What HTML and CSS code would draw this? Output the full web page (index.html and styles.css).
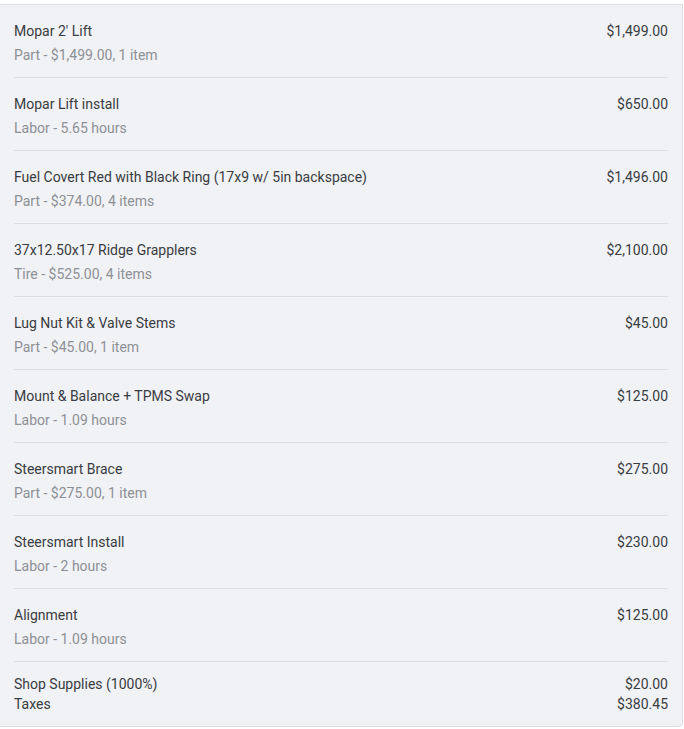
FILE: index.html
```html
<!DOCTYPE html>
<html lang="en">

<head>
  <meta charset="UTF-8">
  <title>Line Items</title>
  <link rel="stylesheet" href="styles.css">
</head>

<body>

  <div class="items-panel">
    <div class="line-item">
      <div class="item-info">
        <div class="item-name">Mopar 2' Lift</div>
        <div class="item-detail">Part - $1,499.00, 1 item</div>
      </div>
      <div class="item-total">$1,499.00</div>
    </div>

    <div class="line-item">
      <div class="item-info">
        <div class="item-name">Mopar Lift install</div>
        <div class="item-detail">Labor - 5.65 hours</div>
      </div>
      <div class="item-total">$650.00</div>
    </div>

    <div class="line-item">
      <div class="item-info">
        <div class="item-name">Fuel Covert Red with Black Ring (17x9 w/ 5in backspace)</div>
        <div class="item-detail">Part - $374.00, 4 items</div>
      </div>
      <div class="item-total">$1,496.00</div>
    </div>

    <div class="line-item">
      <div class="item-info">
        <div class="item-name">37x12.50x17 Ridge Grapplers</div>
        <div class="item-detail">Tire - $525.00, 4 items</div>
      </div>
      <div class="item-total">$2,100.00</div>
    </div>

    <div class="line-item">
      <div class="item-info">
        <div class="item-name">Lug Nut Kit &amp; Valve Stems</div>
        <div class="item-detail">Part - $45.00, 1 item</div>
      </div>
      <div class="item-total">$45.00</div>
    </div>

    <div class="line-item">
      <div class="item-info">
        <div class="item-name">Mount &amp; Balance + TPMS Swap</div>
        <div class="item-detail">Labor - 1.09 hours</div>
      </div>
      <div class="item-total">$125.00</div>
    </div>

    <div class="line-item">
      <div class="item-info">
        <div class="item-name">Steersmart Brace</div>
        <div class="item-detail">Part - $275.00, 1 item</div>
      </div>
      <div class="item-total">$275.00</div>
    </div>

    <div class="line-item">
      <div class="item-info">
        <div class="item-name">Steersmart Install</div>
        <div class="item-detail">Labor - 2 hours</div>
      </div>
      <div class="item-total">$230.00</div>
    </div>

    <div class="line-item">
      <div class="item-info">
        <div class="item-name">Alignment</div>
        <div class="item-detail">Labor - 1.09 hours</div>
      </div>
      <div class="item-total">$125.00</div>
    </div>

    <div class="summary">
      <div class="summary-row">
        <span>Shop Supplies (1000%)</span>
        <span>$20.00</span>
      </div>
      <div class="summary-row">
        <span>Taxes</span>
        <span>$380.45</span>
      </div>
    </div>
  </div>

</body>

</html>
```

FILE: styles.css
```css
* {
  box-sizing: border-box;
}

body {
  margin: 0;
  padding: 4px 0 0;
  background: #ffffff;
  font-family: Roboto, "Liberation Sans", Arial, sans-serif;
  font-size: 14px;
  line-height: 20px;
  color: #393c42;
}

.items-panel {
  width: 684px;
  margin-left: -1px;
  background: #f1f2f5;
  border: 1px solid #dcdee3;
  border-radius: 0 0 4px 0;
  padding: 0 14px;
}

.line-item {
  display: flex;
  justify-content: space-between;
  align-items: flex-start;
  padding: 16px 0 12px;
  border-bottom: 1px solid #dcdee3;
}

.item-name {
  margin-bottom: 4px;
}

.item-detail {
  color: #8d9096;
}

.summary {
  padding: 12px 0 12px;
}

.summary-row {
  display: flex;
  justify-content: space-between;
}
```
